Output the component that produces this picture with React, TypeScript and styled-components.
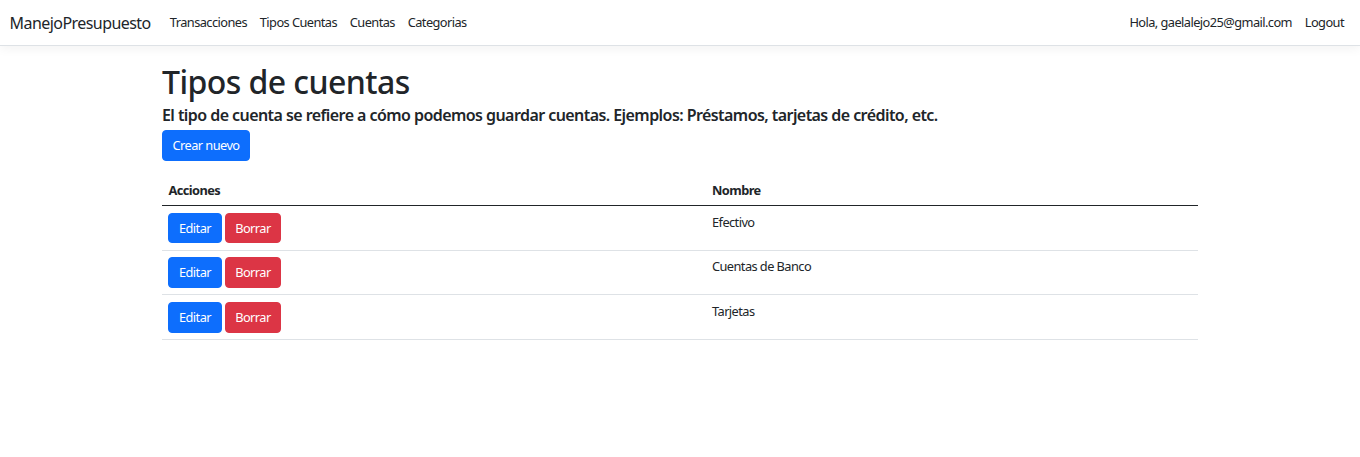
import React from "react";
import styled, { createGlobalStyle } from "styled-components";

const GlobalStyle = createGlobalStyle`
  html, body {
    margin: 0;
    padding: 0;
    background: #fff;
  }
  body {
    font-family: "Noto Sans", "Open Sans", Arial, sans-serif;
    font-size: 12.8px;
    line-height: 1.5;
    letter-spacing: -0.044em;
    color: #212529;
  }
  * { box-sizing: border-box; }
`;

const Navbar = styled.nav`
  display: flex;
  align-items: center;
  justify-content: space-between;
  height: 46px;
  padding: 0 9.6px;
  background: #fff;
  border-bottom: 1px solid #dee2e6;
  box-shadow: 0 3px 10px rgba(0, 0, 0, 0.05);
  margin-bottom: 16.8px;
`;

const NavGroup = styled.div`
  display: flex;
  align-items: center;
`;

const Brand = styled.a`
  font-size: 16px;
  color: #212529;
  text-decoration: none;
  margin-right: 12.8px;
  padding: 4px 0;
`;

const NavLink = styled.a`
  color: #212529;
  text-decoration: none;
  padding: 6.4px 6.4px;
`;

const Container = styled.main`
  width: 1036px;
  margin: 0 auto;
`;

const Title = styled.h1`
  font-size: 32px;
  font-weight: 500;
  line-height: 1.2;
  margin: 0 0 4.4px;
`;

const Subtitle = styled.h5`
  font-size: 16px;
  font-weight: 600;
  line-height: 1.2;
  margin: 0 0 5.4px;
`;

const Button = styled.button<{ $variant?: "primary" | "danger" }>`
  font-family: inherit;
  font-size: 12.8px;
  line-height: 1.5;
  letter-spacing: inherit;
  padding: 4.8px 9.6px;
  border-radius: 4px;
  border: 1px solid ${(p) => (p.$variant === "danger" ? "#dc3545" : "#0d6efd")};
  background: ${(p) => (p.$variant === "danger" ? "#dc3545" : "#0d6efd")};
  color: #fff;
  cursor: pointer;
`;

const Actions = styled.div`
  display: flex;
  gap: 3px;
`;

const Table = styled.table`
  width: 100%;
  margin-top: 13px;
  border-collapse: collapse;
  vertical-align: top;
`;

const Th = styled.th<{ $width?: string }>`
  text-align: left;
  font-weight: 700;
  padding: 6.8px 6.4px 5.4px;
  width: ${(p) => p.$width ?? "auto"};
  border-bottom: 1.6px solid #212529;
`;

const Td = styled.td`
  padding: 6.4px;
  vertical-align: top;
  border-bottom: 1px solid #dee2e6;
`;

const tipos = ["Efectivo", "Cuentas de Banco", "Tarjetas"];

export default function App() {
  return (
    <>
      <GlobalStyle />
      <Navbar>
        <NavGroup>
          <Brand href="#">ManejoPresupuesto</Brand>
          <NavLink href="#">Transacciones</NavLink>
          <NavLink href="#">Tipos Cuentas</NavLink>
          <NavLink href="#">Cuentas</NavLink>
          <NavLink href="#">Categorias</NavLink>
        </NavGroup>
        <NavGroup>
          <NavLink href="#">Hola, gaelalejo25@gmail.com</NavLink>
          <NavLink href="#">Logout</NavLink>
        </NavGroup>
      </Navbar>
      <Container>
        <Title>Tipos de cuentas</Title>
        <Subtitle>
          El tipo de cuenta se refiere a cómo podemos guardar cuentas. Ejemplos: Préstamos, tarjetas de crédito, etc.
        </Subtitle>
        <Button>Crear nuevo</Button>
        <Table>
          <thead>
            <tr>
              <Th $width="543.6px">Acciones</Th>
              <Th>Nombre</Th>
            </tr>
          </thead>
          <tbody>
            {tipos.map((t) => (
              <tr key={t}>
                <Td>
                  <Actions>
                    <Button>Editar</Button>
                    <Button $variant="danger">Borrar</Button>
                  </Actions>
                </Td>
                <Td>{t}</Td>
              </tr>
            ))}
          </tbody>
        </Table>
      </Container>
    </>
  );
}
